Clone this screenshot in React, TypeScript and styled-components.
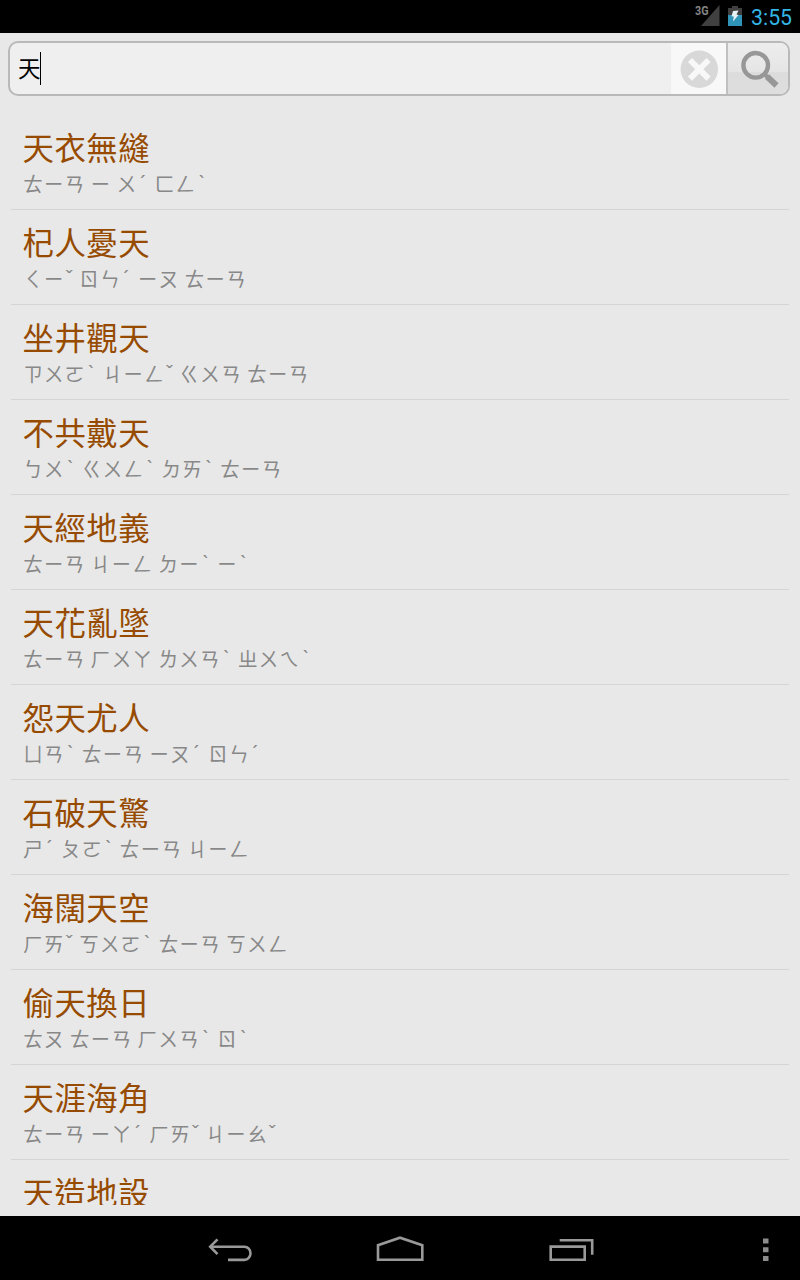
import React from "react";
import styled, { createGlobalStyle } from "styled-components";

const GlobalStyle = createGlobalStyle`
  html, body { margin: 0; padding: 0; background: #000; }
  * { box-sizing: border-box; }
`;

const Screen = styled.div`
  width: 800px;
  height: 1280px;
  display: flex;
  flex-direction: column;
  overflow: hidden;
  background: #e8e8e8;
  font-family: "Open Sans", "Noto Sans CJK TC", sans-serif;
`;

const StatusBar = styled.header`
  flex: none;
  height: 33px;
  background: #000;
  display: flex;
  justify-content: flex-end;
  padding-right: 8px;
`;

const StatusIcons = styled.svg`
  display: block;
  width: 56px;
  height: 33px;
`;

const Clock = styled.div`
  width: 41px;
  font: 400 21.3px/36px Roboto, sans-serif;
  color: #33b5e5;
  white-space: nowrap;
`;

const SearchBar = styled.div`
  flex: none;
  height: 55px;
  margin: 8px 10px 0 8px;
  border: 2px solid #b9b9b9;
  border-radius: 10px;
  background: #efefef;
  display: flex;
  overflow: hidden;
`;

const Query = styled.div`
  flex: 1;
  display: flex;
  padding-left: 8px;
  font: 400 22.5px/49px "Noto Sans CJK TC", sans-serif;
  color: #000;
`;

const Caret = styled.span`
  width: 1px;
  height: 33px;
  margin: 9px 0 0 -0.5px;
  background: #000;
`;

const ClearButton = styled.button`
  width: 55px;
  padding: 0;
  border: 0;
  background: #f8f8f8;
`;

const SearchButton = styled.button`
  width: 62px;
  padding: 0;
  border: 0;
  border-left: 2px solid #c0c0c0;
  background: linear-gradient(#ededed 0, #e5e5e5 57%, #dcdcdc 58%, #dedede 100%);
`;

const ButtonIcon = styled.svg`
  display: block;
  width: 100%;
  height: 51px;
`;

const List = styled.ul`
  flex: none;
  height: 1090px;
  margin: 19px 11px 0;
  padding: 0;
  list-style: none;
  overflow: hidden;
`;

const Item = styled.li`
  height: 95px;
  padding: 10px 0 0 11.5px;
  border-bottom: 1px solid #d5d5d5;
`;

const Title = styled.div`
  height: 47px;
  font-size: 31.4px;
  letter-spacing: 0.5px;
  line-height: 46px;
  color: #964b00;
  white-space: nowrap;
`;

const Reading = styled.div`
  height: 28px;
  padding-left: 0.5px;
  font-size: 20px;
  letter-spacing: 0.8px;
  word-spacing: -0.8px;
  line-height: 26px;
  color: #888;
  white-space: nowrap;
`;

const Tone = styled.span<{ $narrow: boolean }>`
  display: inline-block;
  width: ${(p) => (p.$narrow ? 9.2 : 11.9)}px;
  padding-right: ${(p) => (p.$narrow ? 0 : 1)}px;
  letter-spacing: 0;
  font-family: "Noto Sans", sans-serif;
  line-height: 20px;
  vertical-align: 2px;
  text-align: center;
`;

const NavBar = styled.nav`
  flex: none;
  margin-top: auto;
  height: 64px;
  background: #000;
`;

const NavIcons = styled.svg`
  display: block;
`;

const SignalText = styled.text`
  font: 700 12px Roboto, sans-serif;
  fill: #858585;
`;

const idioms: [string, string][] = [
  ["天衣無縫", "ㄊㄧㄢ ㄧ ㄨˊ ㄈㄥˋ"],
  ["杞人憂天", "ㄑㄧˇ ㄖㄣˊ ㄧㄡ ㄊㄧㄢ"],
  ["坐井觀天", "ㄗㄨㄛˋ ㄐㄧㄥˇ ㄍㄨㄢ ㄊㄧㄢ"],
  ["不共戴天", "ㄅㄨˋ ㄍㄨㄥˋ ㄉㄞˋ ㄊㄧㄢ"],
  ["天經地義", "ㄊㄧㄢ ㄐㄧㄥ ㄉㄧˋ ㄧˋ"],
  ["天花亂墜", "ㄊㄧㄢ ㄏㄨㄚ ㄌㄨㄢˋ ㄓㄨㄟˋ"],
  ["怨天尤人", "ㄩㄢˋ ㄊㄧㄢ ㄧㄡˊ ㄖㄣˊ"],
  ["石破天驚", "ㄕˊ ㄆㄛˋ ㄊㄧㄢ ㄐㄧㄥ"],
  ["海闊天空", "ㄏㄞˇ ㄎㄨㄛˋ ㄊㄧㄢ ㄎㄨㄥ"],
  ["偷天換日", "ㄊㄡ ㄊㄧㄢ ㄏㄨㄢˋ ㄖˋ"],
  ["天涯海角", "ㄊㄧㄢ ㄧㄚˊ ㄏㄞˇ ㄐㄧㄠˇ"],
  ["天造地設", ""],
];

// Tone marks get their own narrower cell; the phonetic letters keep a full one.
const splitTones = (reading: string) =>
  reading
    .split(/([ˊˇˋ])/)
    .map((part, i) => (i % 2 ? <Tone key={i} $narrow={part === "ˇ"}>{part}</Tone> : part));

export default function App() {
  return (
    <Screen>
      <GlobalStyle />
      <StatusBar>
        <StatusIcons viewBox="695 0 56 33">
          <path d="M719.5 5v21H701z" fill="#404040" />
          <SignalText x="695" y="15" textLength="13.5" lengthAdjust="spacingAndGlyphs">3G</SignalText>
          <path d="M732 6h6v2h4v7h-14V8h4z" fill="#404040" />
          <path d="M728 15h14v11h-14z" fill="#3094b8" />
          <path d="M733 11l5.5-.5-2 4 2 .5-5.5 6.5.8-5-2.3-.2z" fill="#e8f2f5" />
        </StatusIcons>
        <Clock>3:55</Clock>
      </StatusBar>
      <SearchBar>
        <Query>
          天<Caret />
        </Query>
        <ClearButton aria-label="Clear">
          <ButtonIcon viewBox="671 43 55 51">
            <circle cx="699.3" cy="69.3" r="18.7" fill="#d8d8d8" />
            <path d="M690 60l18.6 18.6m0-18.6L690 78.6" stroke="#f8f8f8" strokeWidth="5.8" />
          </ButtonIcon>
        </ClearButton>
        <SearchButton aria-label="Search">
          <ButtonIcon viewBox="728 43 60 51">
            <circle cx="755.7" cy="65.3" r="12.3" fill="none" stroke="#979797" strokeWidth="4.4" />
            <path d="M764.5 74l4 4" stroke="#979797" strokeWidth="4" />
            <path d="M767 76.5l9.5 9" stroke="#979797" strokeWidth="6" />
          </ButtonIcon>
        </SearchButton>
      </SearchBar>
      <List>
        {idioms.map(([title, reading]) => (
          <Item key={title}>
            <Title>{title}</Title>
            {reading && <Reading>{splitTones(reading)}</Reading>}
          </Item>
        ))}
      </List>
      <NavBar>
        <NavIcons width="800" height="64" viewBox="0 1216 800 64" fill="none" stroke="#999" strokeWidth="2.6">
          <path d="M210 1246.7h34.5a6 6.6 0 0 1 0 13.2H228" />
          <path d="M217.5 1239.3l-7.3 7.4 7.3 7.4" />
          <path d="M378 1259.8v-14.6l22-7.5 22.3 7.5v14.6z" />
          <path d="M550.7 1246.6h34v13.2h-34z" />
          <path d="M559.7 1240.2h32.5v14.5" />
          <path d="M763 1238.5h5.5v5H763zM763 1247.2h5.5v5H763zM763 1256h5.5v5H763z" fill="#8c8c8c" stroke="none" />
        </NavIcons>
      </NavBar>
    </Screen>
  );
}
